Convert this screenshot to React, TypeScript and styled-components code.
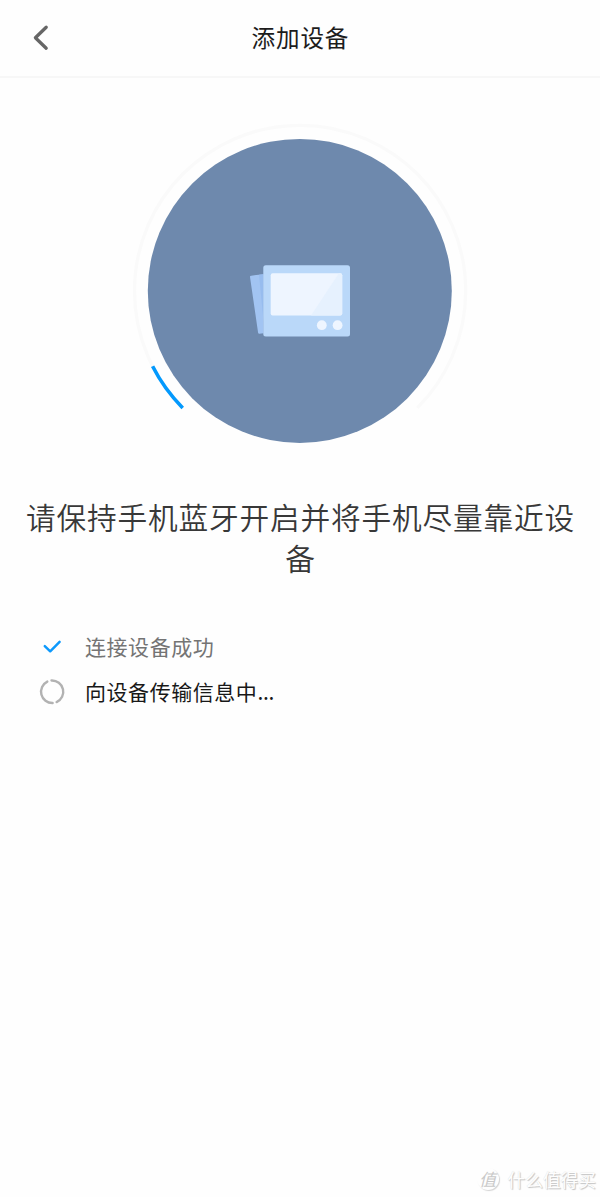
import React from "react";
import styled, { createGlobalStyle } from "styled-components";

const GlobalStyle = createGlobalStyle`
  * { box-sizing: border-box; }
  body {
    margin: 0;
    background: #fefefe;
    font-family: "Noto Sans CJK SC", "Noto Sans", sans-serif;
  }
`;

const Screen = styled.div`
  display: flex;
  flex-direction: column;
  width: 600px;
  height: 1197px;
  overflow: hidden;
`;

const Header = styled.header`
  display: grid;
  grid-template-columns: 82px 1fr 82px;
  align-items: center;
  height: 78px;
  border-bottom: 2px solid #f7f7f7;
`;

const BackButton = styled.button`
  display: flex;
  justify-content: center;
  padding: 0;
  border: 0;
  background: none;
`;

const Title = styled.h1`
  margin: 0;
  padding-bottom: 2px;
  text-align: center;
  font-size: 23.6px;
  letter-spacing: 0.8px;
  text-indent: 0.8px;
  font-weight: 400;
  line-height: 36px;
  color: #1c1c1c;
`;

const Main = styled.main`
  display: flex;
  flex: 1;
  flex-direction: column;
`;

const ProgressDial = styled.svg`
  display: block;
  align-self: center;
  margin-top: 43px;
`;

const Prompt = styled.h2`
  margin: 37px 20px 0;
  padding-left: 1px;
  text-align: center;
  font-size: 29.7px;
  letter-spacing: 0.8px;
  font-weight: 350;
  line-height: 41px;
  color: #383838;
`;

const Steps = styled.ul`
  display: flex;
  flex-direction: column;
  margin: 46px 0 0;
  padding: 0 0 0 38px;
  list-style: none;
`;

const Step = styled.li<{ $active?: boolean }>`
  display: flex;
  align-items: center;
  gap: 19px;
  height: 45px;
  font-size: 21px;
  letter-spacing: 0.55px;
  line-height: 30px;
  color: ${(p) => (p.$active ? "#181818" : "#747474")};
`;

const StepLabel = styled.span`
  padding-bottom: 2px;
`;

const Dots = styled.span`
  letter-spacing: -0.3px;
`;

const Watermark = styled.footer`
  display: flex;
  align-items: center;
  align-self: flex-end;
  gap: 8px;
  height: 36px;
  margin-right: 4px;
  font-size: 17.7px;
  line-height: 30px;
  color: #fefefe;
  text-shadow: 1px 1px 1px #c2c2c2, 0 0 1px #d8d8d8;
`;

const Seal = styled.span`
  display: flex;
  align-items: center;
  justify-content: center;
  width: 22px;
  height: 22px;
  margin-right: 1px;
  border-radius: 50%;
  font-size: 17px;
  font-style: italic;
  color: #c9c9c9;
  text-shadow: none;
  box-shadow: 1px 1px 1px #d4d4d4;
`;

export default function App() {
  return (
    <>
      <GlobalStyle />
      <Screen>
        <Header>
          <BackButton aria-label="返回">
            <svg width="24" height="30" viewBox="0 0 24 30" fill="none">
              <path d="M17.2 4.2 6.4 14.7 17.2 25.2" stroke="#666" strokeWidth="3.3" strokeLinecap="round" strokeLinejoin="round" />
            </svg>
          </BackButton>
          <Title>添加设备</Title>
        </Header>
        <Main>
          <ProgressDial width="340" height="338" viewBox="130 121 340 338" fill="none">
            <path d="M182.9 407.9A165.6 165.6 0 1 1 417.3 407.9" stroke="#fafafa" strokeWidth="3.3" />
            <path d="M182.7 407.9A165.6 165.6 0 0 1 152.6 366.3" stroke="#0399fd" strokeWidth="3.6" />
            <circle cx="299.8" cy="290.9" r="152" fill="#6e89ad" />
            <path d="M251.2 275.7 263.5 274.2V333.3L259.4 333.7Q258.3 333.8 258.1 332.7L250 277.1Q249.8 275.9 251.2 275.7Z" fill="#a2c4f2" />
            <path d="M259 274.8 263.5 274.2V321Z" fill="#97bcee" />
            <rect x="263.3" y="265.3" width="86.7" height="71.2" rx="2.5" fill="#bad8f9" />
            <rect x="270.7" y="273.2" width="71.5" height="42.2" rx="2" fill="#eef5ff" />
            <path d="M339 273.2H340.2Q342.2 273.2 342.2 275.2V313.4Q342.2 315.4 340.2 315.4H311Z" fill="#e6f1fe" />
            <circle cx="321.8" cy="325.2" r="4.9" fill="#eef5ff" />
            <circle cx="337.6" cy="325.2" r="4.9" fill="#eef5ff" />
          </ProgressDial>
          <Prompt>请保持手机蓝牙开启并将手机尽量靠近设备</Prompt>
          <Steps>
            <Step>
              <svg width="28" height="28" viewBox="0 0 28 28" fill="none">
                <path d="M6.8 13.2 12.2 18.3 21.6 8.9" stroke="#0d99fc" strokeWidth="2.5" strokeLinecap="round" strokeLinejoin="round" />
              </svg>
              <StepLabel>连接设备成功</StepLabel>
            </Step>
            <Step $active>
              <svg width="28" height="28" viewBox="0 0 28 28" fill="none">
                <path d="M13.5 2.5A11.3 11.3 0 0 1 18.6 24.1M14.6 25A11.3 11.3 0 0 1 9.3 3.6" stroke="#b2b2b2" strokeWidth="2.4" strokeLinecap="round" />
              </svg>
              <StepLabel>向设备传输信息中<Dots>...</Dots></StepLabel>
            </Step>
          </Steps>
        </Main>
        <Watermark>
          <Seal>值</Seal>
          <span>什么值得买</span>
        </Watermark>
      </Screen>
    </>
  );
}
